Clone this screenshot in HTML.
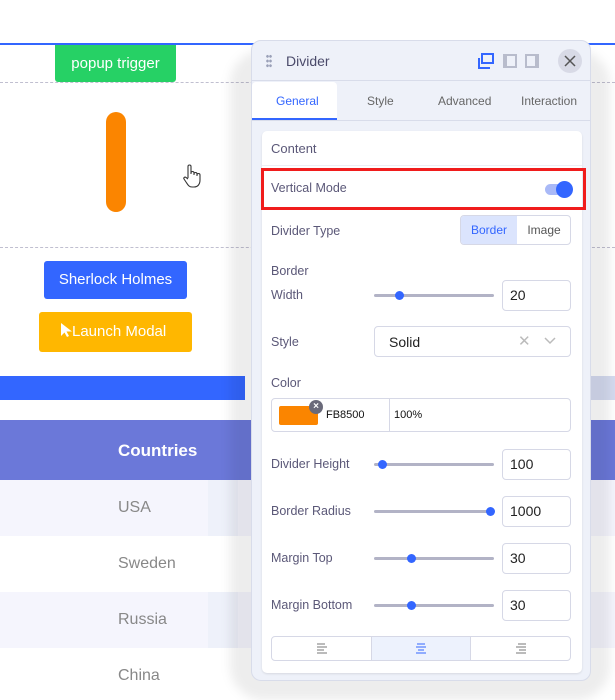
<!DOCTYPE html>
<html><head><style>
*{box-sizing:border-box;margin:0;padding:0}
body{width:615px;height:684px;overflow:hidden;background:#fff;font-family:"Liberation Sans",sans-serif;position:relative;font-size:13px;color:#5a5a7a}
.a{position:absolute}
.lbl{position:absolute;left:271px;font-size:12.5px;color:#5b5878}
.slider{position:absolute;left:374px;width:120px;height:3px;background:#b2b3c6;border-radius:2px}
.slider i{position:absolute;top:-3px;width:9px;height:9px;border-radius:50%;background:#3366ff}
.inp{position:absolute;left:502px;width:69px;height:31px;border:1px solid #d6d8e6;border-radius:4px;background:#fff;padding:0 0 0 7px;line-height:29px;font-size:14px;color:#222}
</style></head><body>
<div class="a" style="left:0;top:43px;width:615px;height:2px;background:#3366ff"></div>
<div class="a" style="left:55px;top:45px;width:121px;height:37px;background:#26d165;border-radius:0 0 3px 3px;color:#fff;font-size:15px;text-align:center;line-height:38px">popup trigger</div>
<div class="a" style="left:0;top:82px;width:615px;border-top:1px dashed #c0bfd0"></div>
<div class="a" style="left:106px;top:112px;width:20px;height:100px;background:#fb8500;border-radius:10px"></div>
<svg class="a" style="left:182px;top:163px" width="20" height="26"><path d="M6 15V3.5a1.5 1.5 0 0 1 3 0V11M9 10a1.5 1.5 0 0 1 3 0v2M12 11a1.5 1.5 0 0 1 3 0v2M15 12a1.5 1.5 0 0 1 3 0v5c0 4-2 7-6 7h-2c-3 0-4-2-6-5l-2-3c-.8-1.2.8-2.5 2-1.5L6 16" fill="#fff" stroke="#333" stroke-width="1.1"/></svg>
<div class="a" style="left:0;top:247px;width:615px;border-top:1px dashed #c0bfd0"></div>
<div class="a" style="left:44px;top:261px;width:143px;height:38px;background:#3366ff;border-radius:3px;color:#fff;font-size:15px;text-align:center;line-height:38px">Sherlock Holmes</div>
<div class="a" style="left:39px;top:312px;width:153px;height:40px;background:#ffb700;border-radius:3px;color:#fff;font-size:15px;line-height:40px;padding-left:22px"><svg width="11" height="14" style="vertical-align:-1px"><path d="M0 0v13l3.5-3.5 2.5 4.5 2-1-2.5-4.5H11z" fill="#fff"/></svg>Launch Modal</div>
<div class="a" style="left:0;top:376px;width:245px;height:24px;background:#3366ff"></div>
<div class="a" style="left:590px;top:376px;width:25px;height:24px;background:#d5dbf0"></div>
<div class="a" style="left:0;top:420px;width:615px;height:60px;background:#6b78d9"></div>
<div class="a" style="left:118px;top:441px;color:#fff;font-weight:bold;font-size:17px">Countries</div>
<div class="a" style="left:0;top:480px;width:615px;height:56px;background:#f5f5fd"></div>
<div class="a" style="left:0;top:592px;width:615px;height:56px;background:#f5f5fd"></div>
<div class="a" style="left:118px;top:499px;font-size:16px;color:#888">USA</div>
<div class="a" style="left:118px;top:555px;font-size:16px;color:#888">Sweden</div>
<div class="a" style="left:118px;top:611px;font-size:16px;color:#888">Russia</div>
<div class="a" style="left:118px;top:667px;font-size:16px;color:#888">China</div>
<div class="a" style="left:208px;top:480px;width:30px;height:56px;background:#eef1fa"></div>
<div class="a" style="left:208px;top:592px;width:30px;height:56px;background:#eef1fa"></div>
<div class="a" style="left:230px;top:50px;width:380px;height:650px;border-radius:34px;background:rgba(0,0,0,0.07);filter:blur(5px)"></div>
<div class="a" style="left:251px;top:40px;width:340px;height:641px;background:#eef1f9;border:1px solid #d8dcea;border-radius:10px;overflow:hidden">
 <div class="a" style="left:0;top:0;width:340px;height:40px;border-bottom:1px solid #d8dcea"></div>
 <div class="a" style="left:14px;top:13px;width:6px;height:14px;background:radial-gradient(circle,#9aa0b8 1.2px,transparent 1.5px) 0 0/3px 4.7px"></div>
 <div class="a" style="left:34px;top:12px;font-size:14px;color:#4a4a6a">Divider</div>
 <svg class="a" style="left:226px;top:12px" width="16" height="16"><rect x="4" y="1" width="11" height="9" fill="none" stroke="#3366ff" stroke-width="2"/><path d="M1 5v10h11" fill="none" stroke="#3366ff" stroke-width="2"/></svg>
 <svg class="a" style="left:250px;top:12px" width="16" height="16"><rect x="1" y="1" width="14" height="14" fill="#b8bccc"/><rect x="5" y="3" width="8" height="10" fill="#eef1f9"/></svg>
 <svg class="a" style="left:272px;top:12px" width="16" height="16"><rect x="1" y="1" width="14" height="14" fill="#b8bccc"/><rect x="3" y="3" width="8" height="10" fill="#eef1f9"/></svg>
 <div class="a" style="left:306px;top:8px;width:24px;height:24px;border-radius:50%;background:#d8dae6"></div>
 <svg class="a" style="left:312px;top:14px" width="12" height="12"><path d="M1 1L11 11M11 1L1 11" stroke="#555" stroke-width="1.5"/></svg>
 <div class="a" style="left:0;top:41px;width:85px;height:38px;background:#fff;border-radius:4px 4px 0 0"></div>
 <div class="a" style="left:0;top:77px;width:85px;height:2px;background:#3366ff"></div>
 <div class="a" style="left:0;top:79px;width:340px;height:1px;background:#d8dcea"></div>
 <div class="a" style="left:24px;top:53px;font-size:12px;color:#3366ff">General</div>
 <div class="a" style="left:115px;top:53px;font-size:12px;color:#666">Style</div>
 <div class="a" style="left:186px;top:53px;font-size:12px;color:#666">Advanced</div>
 <div class="a" style="left:269px;top:53px;font-size:12px;color:#666">Interaction</div>
 <div class="a" style="left:10px;top:90px;width:320px;height:542px;background:#fff;border-radius:5px;box-shadow:0 1px 2px rgba(0,0,0,.1)"></div>
 <div class="a" style="left:10px;top:124px;width:320px;height:1px;background:#eceef5"></div>
</div>
<div class="lbl" style="top:141px;font-size:13px">Content</div>
<div class="a" style="left:261px;top:168px;width:325px;height:42px;border:3px solid #f01c1c"></div>
<div class="lbl" style="top:181px">Vertical Mode</div>
<div class="a" style="left:545px;top:184px;width:27px;height:11px;border-radius:6px;background:#a9b9f7"></div>
<div class="a" style="left:556px;top:181px;width:17px;height:17px;border-radius:50%;background:#3366ff"></div>
<div class="lbl" style="top:224px">Divider Type</div>
<div class="a" style="left:460px;top:215px;width:111px;height:30px;border:1px solid #d6d8e6;border-radius:4px;background:#fff;overflow:hidden">
 <div class="a" style="left:0;top:0;width:56px;height:28px;background:#dbe4fd;color:#3366ff;font-size:12px;text-align:center;line-height:29px">Border</div>
 <div class="a" style="left:56px;top:0;width:54px;height:28px;color:#555;font-size:12px;text-align:center;line-height:29px">Image</div>
</div>
<div class="lbl" style="top:264px">Border</div>
<div class="lbl" style="top:288px">Width</div>
<div class="slider" style="top:294px"><i style="left:21px"></i></div>
<div class="inp" style="top:280px">20</div>
<div class="lbl" style="top:335px">Style</div>
<div class="a" style="left:374px;top:326px;width:197px;height:31px;border:1px solid #d6d8e6;border-radius:4px;background:#fff"></div>
<div class="a" style="left:389px;top:334px;font-size:14px;color:#222">Solid</div>
<div class="a" style="left:518px;top:332px;font-size:15px;color:#bbb">✕</div>
<svg class="a" style="left:544px;top:337px" width="12" height="8"><path d="M1 1l5 5 5-5" fill="none" stroke="#bbb" stroke-width="1.5"/></svg>
<div class="lbl" style="top:376px">Color</div>
<div class="a" style="left:271px;top:398px;width:300px;height:34px;border:1px solid #d6d8e6;border-radius:4px;background:#fff"></div>
<div class="a" style="left:389px;top:399px;width:1px;height:32px;background:#d6d8e6"></div>
<div class="a" style="left:279px;top:406px;width:39px;height:19px;background:#fb8500;border-radius:2px"></div>
<div class="a" style="left:309px;top:400px;width:14px;height:14px;border-radius:50%;background:#6a6a7a;color:#fff;font-size:10px;text-align:center;line-height:14px;font-weight:bold">×</div>
<div class="a" style="left:326px;top:409px;font-size:11px;color:#111">FB8500</div>
<div class="a" style="left:394px;top:409px;font-size:11px;color:#111">100%</div>
<div class="lbl" style="top:457px">Divider Height</div>
<div class="slider" style="top:463px"><i style="left:4px"></i></div>
<div class="inp" style="top:449px">100</div>
<div class="lbl" style="top:504px">Border Radius</div>
<div class="slider" style="top:510px"><i style="left:112px"></i></div>
<div class="inp" style="top:496px">1000</div>
<div class="lbl" style="top:551px">Margin Top</div>
<div class="slider" style="top:557px"><i style="left:33px"></i></div>
<div class="inp" style="top:543px">30</div>
<div class="lbl" style="top:598px">Margin Bottom</div>
<div class="slider" style="top:604px"><i style="left:33px"></i></div>
<div class="inp" style="top:590px">30</div>
<div class="a" style="left:271px;top:636px;width:300px;height:25px;border:1px solid #d6d8e6;border-radius:4px;background:#fff;overflow:hidden">
 <div class="a" style="left:99px;top:0;width:100px;height:23px;background:#edf2fd;border-left:1px solid #d6d8e6;border-right:1px solid #d6d8e6"></div>
</div>
<svg class="a" style="left:316px;top:643px" width="12" height="11"><path d="M1 1h8M1 4h10M1 7h7M1 10h10" stroke="#777" stroke-width="1"/></svg>
<svg class="a" style="left:415px;top:643px" width="12" height="11"><path d="M2 1h8M1 4h10M3 7h6M1 10h10" stroke="#3366ff" stroke-width="1"/></svg>
<svg class="a" style="left:515px;top:643px" width="12" height="11"><path d="M3 1h8M1 4h10M4 7h7M1 10h10" stroke="#777" stroke-width="1"/></svg>
</body></html>
